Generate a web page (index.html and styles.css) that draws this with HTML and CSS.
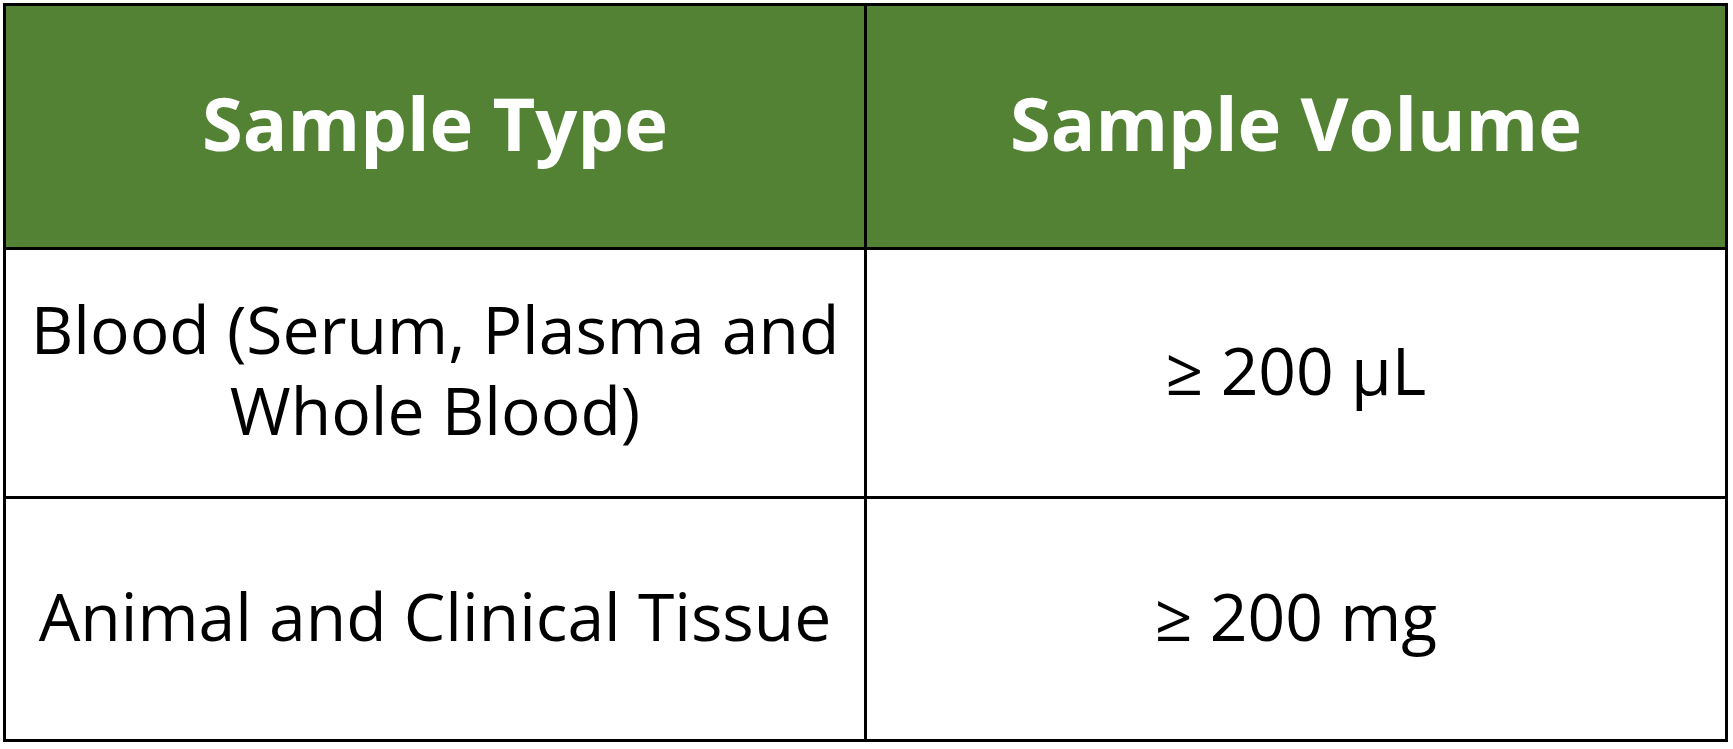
FILE: index.html
```html
<!DOCTYPE html>
<html lang="en">
<head>
<meta charset="utf-8">
<title>Sample Requirements</title>
<link rel="stylesheet" href="styles.css">
</head>
<body>
<table class="sample-table">
  <thead>
    <tr class="head-row">
      <th>Sample Type</th>
      <th>Sample Volume</th>
    </tr>
  </thead>
  <tbody>
    <tr class="row-blood">
      <td>Blood (Serum, Plasma and<br>Whole Blood)</td>
      <td>≥ 200 μL</td>
    </tr>
    <tr class="row-tissue">
      <td>Animal and Clinical Tissue</td>
      <td>≥ 200 mg</td>
    </tr>
  </tbody>
</table>
</body>
</html>
```
FILE: styles.css
```css
html, body {
  background: #ffffff;
}
body {
  margin: 3px;
  font-family: "Open Sans", "Noto Sans", "Liberation Sans", sans-serif;
}
.sample-table {
  border-collapse: collapse;
  width: 1725px;
  table-layout: fixed;
}
.sample-table th,
.sample-table td {
  border: 3px solid #000000;
  padding: 0 0 8px 0;
  text-align: center;
  vertical-align: middle;
  width: 50%;
}
.sample-table th {
  background: #548235;
  color: #ffffff;
  font-weight: 700;
  font-size: 74px;
  line-height: 1.2;
  padding-bottom: 6px;
}
.sample-table td {
  color: #000000;
  font-weight: 400;
  font-size: 66px;
  line-height: 81px;
}
.head-row th {
  height: 235px;
}
.row-blood td {
  height: 238px;
}
.row-tissue td {
  height: 232px;
}
```
